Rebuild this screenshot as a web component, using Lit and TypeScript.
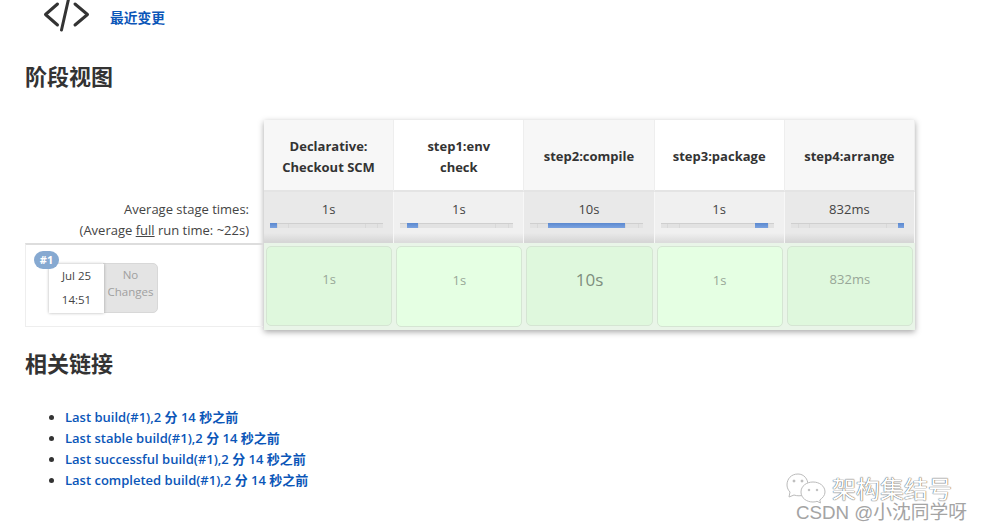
import { LitElement, html, css } from "lit";
import { customElement } from "lit/decorators.js";

interface Stage { name: string[]; time: string; left: number; width: number; large?: boolean }
const stages: Stage[] = [
  { name: ["Declarative:", "Checkout SCM"], time: "1s", left: 0, width: 6 },
  { name: ["step1:env", "check"], time: "1s", left: 6, width: 10 },
  { name: ["step2:compile"], time: "10s", left: 16, width: 68, large: true },
  { name: ["step3:package"], time: "1s", left: 84, width: 11 },
  { name: ["step4:arrange"], time: "832ms", left: 95, width: 5 },
];
const links = [
  "Last build(#1),2 分 14 秒之前",
  "Last stable build(#1),2 分 14 秒之前",
  "Last successful build(#1),2 分 14 秒之前",
  "Last completed build(#1),2 分 14 秒之前",
];

@customElement("app-root")
export class AppRoot extends LitElement {
  static styles = css`
    :host { display: block; position: relative; width: 983px; height: 532px; overflow: hidden; background: #fff; color: #333;
      font-family: "Open Sans", "Noto Sans CJK SC", sans-serif; font-size: 13px; }
    .page { padding-left: 25px; }
    .top { display: flex; align-items: flex-start; height: 32px; padding-left: 18px; }
    .top svg { display: block; }
    .top a { margin: 10px 0 0 20px; font-size: 13.75px; }
    a { color: #0b56b8; text-decoration: none; font-weight: 600; font-size: 13px; line-height: 16px; }
    h2 { margin: 0; font-size: 22px; line-height: 28px; font-weight: 700; color: #333; }
    .h1 { margin-top: 30px; }
    .view { display: flex; margin-top: 30px; align-items: flex-start; }
    .left { width: 238px; flex: none; padding-top: 73px; }
    .avg { height: 50px; box-sizing: border-box; padding: 6px 14px 0 0; text-align: right; line-height: 21px; font-size: 13px; color: #444; }
    .avg u { text-decoration: underline; }
    .run { height: 84px; box-sizing: border-box; border: 1px solid #eee; border-top: 2px solid #ddd; border-right: 0; display: flex; position: relative; padding: 19px 0 0 22px; }
    .badge { position: absolute; left: 8px; top: 6px; width: 25px; height: 18px; border-radius: 9px; background: #86a9d1; color: #fff; font-weight: 700; font-size: 11px; line-height: 18px; text-align: center; z-index: 2; }
    .date { width: 55px; height: 49px; box-sizing: border-box; background: #fff; box-shadow: 0 0 3px rgba(0,0,0,.3); text-align: center; line-height: 24px; font-size: 11.5px; color: #444; z-index: 1; margin-left: 1px; }
    .change { width: 55px; height: 50px; margin-top: -1px; margin-left: -1px; box-sizing: border-box; background: #e4e4e4; border: 1px solid #d8d8d8; border-radius: 0 5px 5px 0; text-align: center; color: #a0a0a0; line-height: 17px; font-size: 11.5px; padding-top: 2px; }
    .table { margin-left: 1px; width: 651px; flex: none; display: grid; grid-template-columns: repeat(5, 130.2px); grid-template-rows: 72px 51px 87px; background: #e9f5e8; box-shadow: 0 2px 6px rgba(0,0,0,.35); }
    .head { display: flex; align-items: center; justify-content: center; text-align: center; font-weight: 700; font-size: 13px; line-height: 21px; color: #333; border-bottom: 2px solid #e4e4e4; border-right: 1px solid #eee; box-sizing: border-box; padding: 3px 8px 0; }
    .head.odd { background: #f7f7f7; }
    .head.even { background: #fff; }
    .time { box-sizing: border-box; text-align: center; font-size: 13px; line-height: 16px; color: #444; padding-top: 9px; border-right: 1px solid #f7f7f7; background: linear-gradient(#f0f0f0 0, #f0f0f0 41px, #dcdcdc 50px); }
    .time.odd { background: linear-gradient(#e9e9e9 0, #e9e9e9 41px, #d6d6d6 50px); }
    .bar { position: relative; height: 5px; margin: 6px 0 0 6px; width: 113px; background: #e2e2e2; box-shadow: inset 0 1px 0 #cfcfcf; }
    .bar i { position: absolute; top: 0; bottom: 0; background: linear-gradient(#5b88cf, #7ba3e0); }
    .bar b { position: absolute; top: 1px; bottom: 0; width: 1px; background: #d8d8d8; }
    .cellwrap { padding: 3px 2px 0; box-sizing: border-box; }
    .cell { height: 80px; box-sizing: border-box; border: 1px solid #d5e5d3; border-radius: 5px; display: flex; align-items: center; justify-content: center; font-size: 13px; color: #98a798; padding-bottom: 14px; }
    .cell.odd { background: #dff8dd; }
    .cell.even { background: #e5ffe3; height: 81px; }
    .cell.large { font-size: 17px; color: #7e8e7e; }
    .h2 { margin-top: 19px; }
    ul { margin: 30px 0 0; padding: 0 0 0 40px; list-style: disc; }
    li { line-height: 21px; height: 21px; }
    li::marker { color: #333; }
    .mark { position: absolute; left: 784px; top: 472px; width: 195px; height: 56px; }
    .mark svg { position: absolute; left: 0; top: 0; }
    .m1 { position: absolute; left: 48px; top: 4px; font-size: 24px; line-height: 26px; white-space: nowrap; color: #fff; text-shadow: 0 0 1px #555, 0 0 1px #555; }
    .m2 { position: absolute; left: 12px; top: 30px; font-family: "Liberation Sans", "Noto Sans CJK SC", sans-serif; font-size: 18.75px; line-height: 22px; white-space: nowrap; color: #a4a4a4; }
  `;

  render() {
    return html`
      <div class="page">
        <div class="top">
          <svg width="47" height="34" viewBox="0 0 47 34" fill="none" stroke="#333" stroke-width="3" stroke-linecap="round" stroke-linejoin="round">
            <path d="M14.500 4 L2.500 14.500 L14.500 25"/><path d="M32 4 L44.500 14.500 L32 25"/><path d="M26 -3 L18.500 30"/>
          </svg>
          <a href="#">最近变更</a>
        </div>
        <h2 class="h1">阶段视图</h2>
        <div class="view">
          <div class="left">
            <div class="avg">Average stage times:<br/>(Average <u>full</u> run time: ~22s)</div>
            <div class="run">
              <span class="badge">#1</span>
              <div class="date"><div>Jul 25</div><div>14:51</div></div>
              <div class="change">No Changes</div>
            </div>
          </div>
          <div class="table">
            ${stages.map((s, i) => html`<div class="head ${i % 2 ? "even" : "odd"}"><span>${s.name.map((n, j) => html`${j ? html`<br/>` : ""}${n}`)}</span></div>`)}
            ${stages.map((s, i) => html`<div class="time ${i % 2 ? "even" : "odd"}">${s.time}
              <div class="bar">
                ${[6, 16, 84, 95].map((p) => html`<b style="left:${p}%"></b>`)}
                <i style="left:${s.left}%;width:${s.width}%"></i>
              </div></div>`)}
            ${stages.map((s, i) => html`<div class="cellwrap"><div class="cell ${i % 2 ? "even" : "odd"} ${s.large ? "large" : ""}">${s.time}</div></div>`)}
          </div>
        </div>
        <h2 class="h2">相关链接</h2>
        <ul>${links.map((l) => html`<li><a href="#">${l}</a></li>`)}</ul>
      </div>
      <div class="mark">
        <svg width="48" height="34" viewBox="0 0 48 34" fill="#fff" stroke="#bbb" stroke-width="1">
          <path d="M14 2 C7 2 3 7 3 13 C3 16 4.500 18.500 6 20 L5 25 L10 23 C11.500 23.500 13 23.800 15 23.800 C22 23.800 24 19 24 13 C24 7 20 2 14 2 Z"/>
          <path d="M29 10 C22.500 10 17 14 17 20 C17 26 22.500 30 29 30 C30.500 30 32 29.700 33 29.300 L36.500 31 L35.800 28 C38.500 26 41 23.500 41 20 C41 14 35.500 10 29 10 Z"/>
          <circle cx="10" cy="9" r="1" fill="#bbb"/><circle cx="18" cy="9" r="1" fill="#bbb"/>
          <circle cx="25" cy="18" r=".8" fill="#bbb"/><circle cx="33" cy="18" r=".8" fill="#bbb"/>
        </svg>
        <div class="m1">架构集结号</div>
        <div class="m2">CSDN @小沈同学呀</div>
      </div>
    `;
  }
}
